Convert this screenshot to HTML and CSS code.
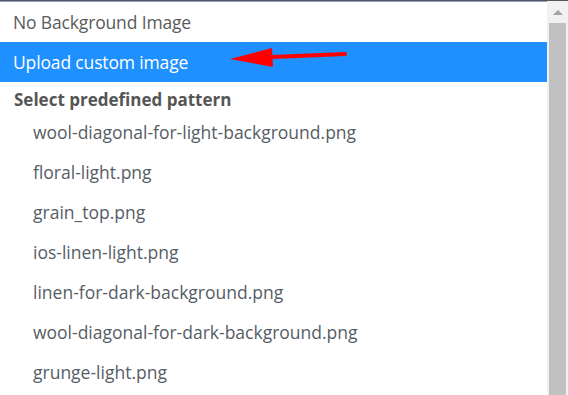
FILE: index.html
```html
<!DOCTYPE html>
<html lang="en">
<head>
    <meta charset="UTF-8">
    <title>Background Image</title>
    <link rel="stylesheet" href="styles.css">
</head>
<body>
    <div class="dropdown">
        <ul class="options">
            <li class="option top">No Background Image</li>
            <li class="option top selected">Upload custom image</li>
            <li class="group">Select predefined pattern</li>
            <li class="option">wool-diagonal-for-light-background.png</li>
            <li class="option">floral-light.png</li>
            <li class="option">grain_top.png</li>
            <li class="option">ios-linen-light.png</li>
            <li class="option">linen-for-dark-background.png</li>
            <li class="option">wool-diagonal-for-dark-background.png</li>
            <li class="option">grunge-light.png</li>
        </ul>
        <div class="scrollbar">
            <span class="arrow-up"></span>
            <div class="thumb"></div>
        </div>
        <!-- annotation arrow -->
        <svg class="pointer" width="130" height="30" viewBox="0 0 130 30">
            <path d="M43 9 L116 6" stroke="#f00" stroke-width="4" stroke-linecap="round" fill="none"/>
            <path d="M1 11 L43 0 L44 19 Z" fill="#f00"/>
        </svg>
    </div>
</body>
</html>
```

FILE: styles.css
```css
body {
    margin: 0;
    font-family: "Open Sans", sans-serif;
    background: #fff;
}
.dropdown {
    position: relative;
    display: flex;
    height: 395px;
    border-top: 1px solid #555;
    box-shadow: inset 0 1px 0 #8aa0c8;
    overflow: hidden;
}
.options {
    flex: 1;
    list-style: none;
    margin: 0;
    padding: 1px 0 0;
}
.option {
    height: 40px;
    line-height: 40px;
    padding-left: 33px;
    font-size: 17.5px;
    color: #555d66;
    white-space: nowrap;
}
.option.top {
    padding-left: 13px;
    letter-spacing: -0.15px;
    color: #5b5b5b;
}
.option.selected {
    background-color: #1e90ff;
    color: #fff;
}
.group {
    height: 30px;
    line-height: 36px;
    padding-left: 14px;
    font-size: 17px;
    font-weight: bold;
    color: #555;
}
.scrollbar {
    width: 21px;
    background: #f1f1f1;
    display: flex;
    flex-direction: column;
    align-items: center;
}
.arrow-up {
    margin-top: 9px;
    width: 0;
    height: 0;
    border-left: 5px solid transparent;
    border-right: 5px solid transparent;
    border-bottom: 5px solid #a3a3a3;
}
.thumb {
    margin-top: 8px;
    width: 17px;
    flex: 1;
    background: #c1c1c1;
}
.pointer {
    position: absolute;
    left: 229px;
    top: 47px;
}
```
